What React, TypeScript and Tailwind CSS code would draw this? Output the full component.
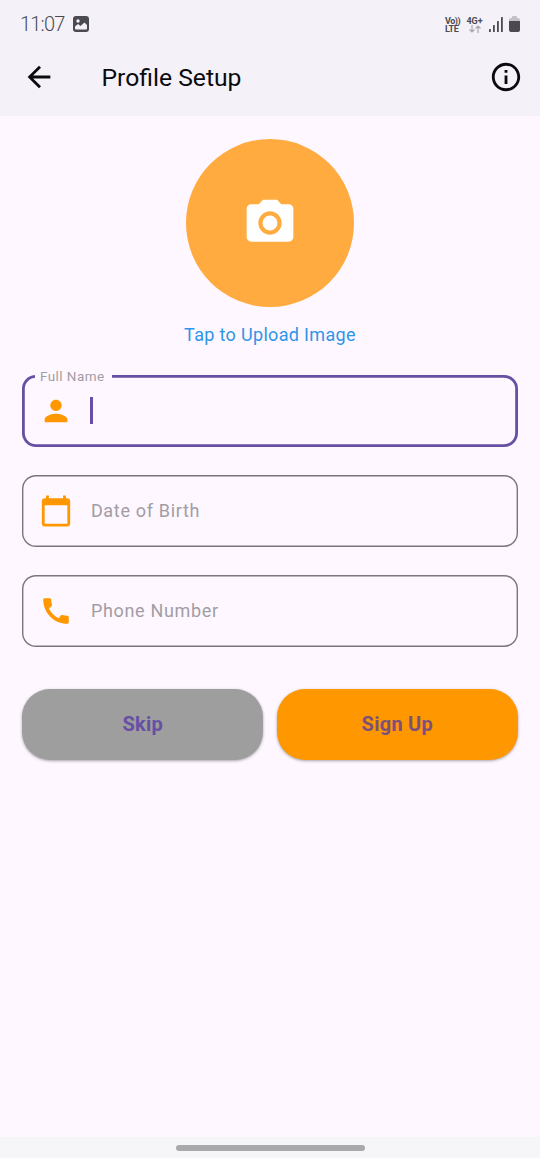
import React from 'react';

type IconProps = { path: string; className: string };

function Icon({ path, className }: IconProps) {
  return (
    <svg viewBox="0 0 24 24" fill="currentColor" className={className} aria-hidden="true">
      <path d={path} />
    </svg>
  );
}

const icons = {
  back: 'M20 11H7.83l5.59-5.59L12 4l-8 8 8 8 1.41-1.41L7.83 13H20v-2z',
  info: 'M11 7h2v2h-2zm0 4h2v6h-2zm1-9C6.48 2 2 6.48 2 12s4.48 10 10 10 10-4.48 10-10S17.52 2 12 2zm0 18c-4.41 0-8-3.59-8-8s3.59-8 8-8 8 3.59 8 8-3.59 8-8 8z',
  camera:
    'M9 2 7.17 4H4c-1.1 0-2 .9-2 2v12c0 1.1.9 2 2 2h16c1.1 0 2-.9 2-2V6c0-1.1-.9-2-2-2h-3.17L15 2H9zm3 15c-2.76 0-5-2.24-5-5s2.24-5 5-5 5 2.24 5 5-2.24 5-5 5zm0-8.2a3.2 3.2 0 1 0 0 6.4 3.2 3.2 0 0 0 0-6.4z',
  person:
    'M12 12c2.21 0 4-1.79 4-4s-1.79-4-4-4-4 1.79-4 4 1.79 4 4 4zm0 2c-2.67 0-8 1.34-8 4v2h16v-2c0-2.66-5.33-4-8-4z',
  calendar:
    'M20 3h-1V1h-2v2H7V1H5v2H4c-1.1 0-2 .9-2 2v16c0 1.1.9 2 2 2h16c1.1 0 2-.9 2-2V5c0-1.1-.9-2-2-2zm0 18H4V8h16v13z',
  phone:
    'M20.01 15.38c-1.23 0-2.42-.2-3.53-.56-.35-.12-.74-.03-1.01.24l-1.57 1.97c-2.83-1.35-5.48-3.9-6.89-6.83l1.95-1.66c.27-.28.35-.67.24-1.02-.37-1.11-.56-2.3-.56-3.53 0-.54-.45-.99-.99-.99H4.19C3.65 3 3 3.24 3 3.99 3 13.28 10.73 21 20.01 21c.71 0 .99-.63.99-1.18v-3.45c0-.54-.45-.99-.99-.99z',
};

function StatusBar() {
  return (
    <div className="flex h-12 items-center justify-between pl-5 pr-5 text-[#4b4a50]">
      <div className="flex items-center">
        <span className="w-[53px] text-[20px] font-light leading-6 tracking-[-0.8px]">11:07</span>
        <svg viewBox="0 0 16 16" className="h-4 w-4">
          <rect width="16" height="16" rx="3" fill="currentColor" />
          <circle cx="5" cy="5" r="1.7" fill="#f4f2f8" />
          <path d="M2 12.500V10.500l3-2.500 2.500 2L11.500 6.500l2.500 2.500v3.500q0 1-1 1H3q-1 0-1-1z" fill="#f4f2f8" />
        </svg>
      </div>
      <div className="flex items-center">
        <div className="flex w-[16px] flex-col whitespace-nowrap text-[9px] font-bold leading-[8px] tracking-[-0.3px] pt-px">
          <span className="tracking-[-0.5px]">Vo))</span>
          <span>LTE</span>
        </div>
        <div className="ml-[5px] flex w-[17px] flex-col items-center pt-px">
          <span className="text-[9px] font-bold leading-[8px]">4G+</span>
          <svg viewBox="0 0 12 8" className="h-2 w-3" fill="none" stroke="#aaa8ae" strokeWidth="1.200">
            <path d="M3 0v7M.5 4.500 3 7l2.500-2.500M9 8V1M6.500 3.500 9 1l2.500 2.500" />
          </svg>
        </div>
        <svg viewBox="0 0 14 15" className="ml-[6px] h-[15px] w-3.5" fill="currentColor">
          <rect x="0" y="12" width="1.800" height="3" rx=".5" />
          <rect x="4" y="8" width="1.800" height="7" rx=".5" />
          <rect x="8" y="4" width="1.800" height="11" rx=".5" />
          <rect x="12" y="0" width="1.800" height="15" rx=".5" />
        </svg>
        <svg viewBox="0 0 11 16" className="ml-[6px] h-4 w-[11px]">
          <path d="M3 2V1q0-1 1-1h3q1 0 1 1v1h1q2 0 2 2v2H0V4q0-2 2-2z" fill="#c3c1c6" />
          <path d="M0 5h11v9q0 2-2 2H2q-2 0-2-2z" fill="currentColor" />
        </svg>
      </div>
    </div>
  );
}

function Field({ icon, label }: { icon: string; label: string }) {
  return (
    <div className="flex h-[71.500px] items-center rounded-[14px] pl-[17px] shadow-[inset_0_0_0_1.4px_#7a757f]">
      <Icon path={icon} className="h-[34px] w-[34px] text-[#ff9800]" />
      <span className="ml-[17.500px] text-[18px] tracking-[0.67px] text-[#a19da4]">{label}</span>
    </div>
  );
}

export default function App() {
  return (
    <div className="flex h-[1158px] w-[540px] flex-col bg-[#fef7ff] font-['Roboto',sans-serif]">
      <header className="h-[116px] bg-[#f4f2f8]">
        <StatusBar />
        <div className="flex h-[58px] items-center pl-[22px] pr-[17px] text-[#0b0a0f]">
          <Icon path={icons.back} className="h-[34px] w-[34px]" />
          <h1 className="ml-[45.500px] text-[24.700px] leading-[31px]">Profile Setup</h1>
          <Icon path={icons.info} className="ml-auto h-[34px] w-[34px]" />
        </div>
      </header>

      <main className="flex flex-1 flex-col px-[22.400px] pt-[22.500px]">
        <button className="flex h-[168.750px] w-[168.750px] items-center justify-center self-center rounded-full bg-[#ffab40]">
          <Icon path={icons.camera} className="h-14 w-14 text-white" />
        </button>
        <p className="mt-[15.250px] text-center text-[18px] leading-6 tracking-[0.33px] text-[#2f95e8]">Tap to Upload Image</p>

        <div className="relative mt-[28.500px] flex h-[71.500px] items-center rounded-[14px] pl-[17px] shadow-[inset_0_0_0_2.8px_#6750a4]">
          <span className="absolute -top-[8px] left-[13px] bg-[#fef7ff] pl-[4.500px] pr-[7px] text-[13.500px] leading-[18px] tracking-[0.45px] text-[#a19da4]">
            Full Name
          </span>
          <Icon path={icons.person} className="h-[34px] w-[34px] text-[#ff9800]" />
          <span className="ml-[17px] h-[27px] w-[2.500px] bg-[#6750a4]" />
        </div>
        <div className="mt-[28.500px] flex flex-col gap-[28.500px]">
          <Field icon={icons.calendar} label="Date of Birth" />
          <Field icon={icons.phone} label="Phone Number" />
        </div>

        <div className="mt-[42px] grid grid-cols-2 gap-[14px] text-[20px] font-bold tracking-[0.25px]">
          <button className="h-[71.500px] rounded-[28px] bg-[#9e9e9e] pb-px text-[#6750a4] shadow-[0_1px_3px_rgba(0,0,0,0.35)]">Skip</button>
          <button className="h-[71.500px] rounded-[28px] bg-[#ff9800] pb-px text-[#7d5078] shadow-[0_1px_3px_rgba(0,0,0,0.35)]">Sign Up</button>
        </div>
      </main>

      <footer className="flex h-[21px] items-center justify-center bg-[#f6f6f8]">
        <div className="h-[6px] w-[189px] rounded-full bg-[#a9a9ab]" />
      </footer>
    </div>
  );
}
